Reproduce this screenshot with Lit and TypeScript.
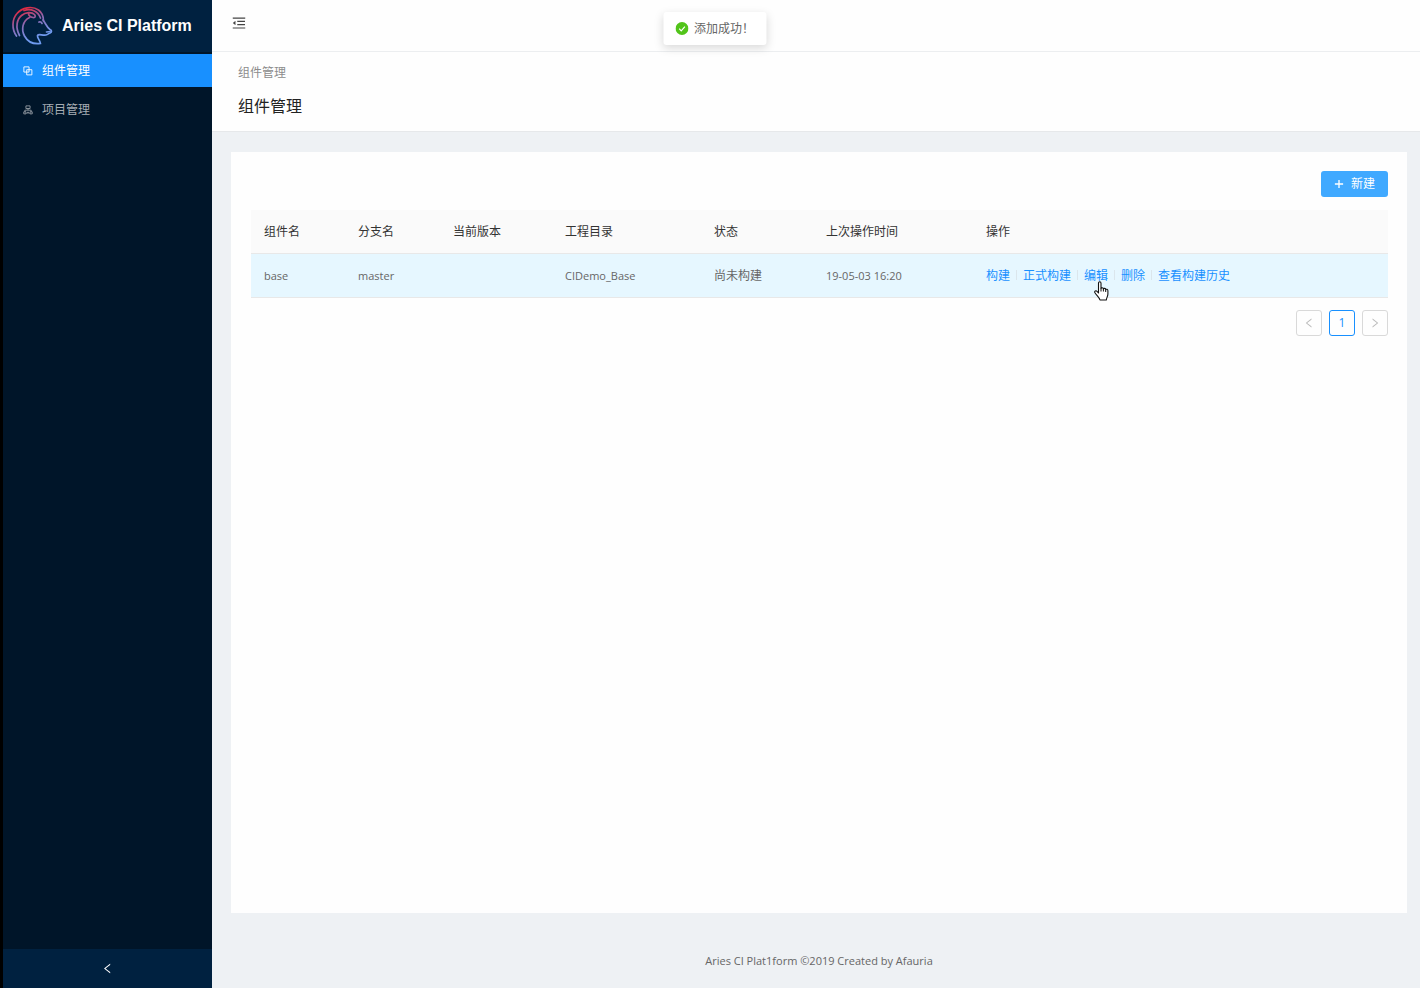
import { LitElement, html, css, svg } from "lit";
import { customElement, state } from "lit/decorators.js";

interface Row {
  name: string;
  branch: string;
  version: string;
  dir: string;
  status: string;
  time: string;
}

const columns = ["组件名", "分支名", "当前版本", "工程目录", "状态", "上次操作时间", "操作"];
const rows: Row[] = [
  { name: "base", branch: "master", version: "", dir: "CIDemo_Base", status: "尚未构建", time: "19-05-03 16:20" },
];
const actions = ["构建", "正式构建", "编辑", "删除", "查看构建历史"];

const icon = (size: number, body: unknown) =>
  html`<svg width=${size} height=${size} viewBox="0 0 1024 1024" fill="currentColor" aria-hidden="true">${body}</svg>`;

const foldIcon = svg`<path d="M408 442h480c4.4 0 8-3.6 8-8v-56c0-4.4-3.6-8-8-8H408c-4.4 0-8 3.6-8 8v56c0 4.4 3.6 8 8 8zm-8 204c0 4.4 3.6 8 8 8h480c4.4 0 8-3.6 8-8v-56c0-4.4-3.6-8-8-8H408c-4.4 0-8 3.6-8 8v56zm504-486H120c-4.4 0-8 3.6-8 8v56c0 4.4 3.6 8 8 8h784c4.4 0 8-3.6 8-8v-56c0-4.4-3.6-8-8-8zm0 632H120c-4.4 0-8 3.6-8 8v56c0 4.4 3.6 8 8 8h784c4.4 0 8-3.6 8-8v-56c0-4.4-3.6-8-8-8zM115.4 518.9L271.7 642c5.8 4.6 14.4.5 14.4-6.9V388.9c0-7.4-8.5-11.5-14.4-6.9L115.4 505.1a8.74 8.74 0 0 0 0 13.8z"/>`;
const blockIcon = svg`<path fill="none" stroke="currentColor" stroke-width="90" d="M90 90h530v530H90zM380 380h530v530H380z"/>`;
const treeIcon = svg`<path fill="none" stroke="currentColor" stroke-width="80" d="M300 90h424v270H300zM512 360v170M190 700V530h644v170M80 700h230v210H80zM714 700h230v210H714zM400 900l112-200 112 200"/>`;
const leftIcon = svg`<path d="M724 218.3V141c0-6.7-7.7-10.4-12.9-6.3L260.3 486.8a31.86 31.86 0 0 0 0 50.3l450.8 352.1c5.3 4.1 12.9.4 12.9-6.3v-77.3c0-4.9-2.3-9.6-6.1-12.6l-360-281 360-281.1c3.8-3 6.1-7.7 6.1-12.6z"/>`;
const rightIcon = svg`<path d="M765.7 486.8L314.9 134.7A7.97 7.97 0 0 0 302 141v77.3c0 4.9 2.3 9.6 6.1 12.6l360 281.1-360 281.1c-3.9 3-6.1 7.7-6.1 12.6V883c0 6.7 7.7 10.4 12.9 6.3l450.8-352.1a31.96 31.96 0 0 0 0-50.4z"/>`;
const plusIcon = svg`<path d="M444 90h136v844H444zM90 444h844v136H90z"/>`;

@customElement("app-root")
export class AppRoot extends LitElement {
  @state() private active = 0;

  static styles = css`
    :host {
      display: flex;
      position: relative;
      min-height: 100vh;
      box-sizing: border-box;
      border-left: 3px solid #000;
      background: #eef1f4;
      color: #666;
      font: 11px/18px "Open Sans", "Noto Sans CJK SC", sans-serif;
    }
    * { box-sizing: border-box; }
    svg { display: block; flex: none; }
    a { text-decoration: none; color: inherit; }
    button {
      font: inherit;
      padding: 0;
      border: 0;
      background: none;
      color: inherit;
      display: flex;
      align-items: center;
      justify-content: center;
    }
    .cjk { font-size: 12px; }
    .side {
      width: 209px;
      flex: none;
      display: flex;
      flex-direction: column;
      background: #001529;
      color: #a6adb4;
    }
    .brand {
      height: 52px;
      padding-left: 8px;
      display: flex;
      align-items: center;
      gap: 9px;
      background: #002140;
      color: #fff;
    }
    .brand-name {
      margin: 0;
      font: bold 16px/24px "Liberation Sans", Arial, sans-serif;
      white-space: nowrap;
    }
    .menu {
      flex: 1;
      padding-top: 2px;
      display: flex;
      flex-direction: column;
      gap: 6px;
    }
    .item {
      height: 33px;
      padding-left: 20px;
      display: flex;
      align-items: center;
      gap: 9px;
      font-size: 12px;
    }
    .item.on { background: #1890ff; color: #fff; }
    .collapse { height: 39px; background: #002140; color: #fff; }
    .main {
      flex: 1;
      min-width: 0;
      display: flex;
      flex-direction: column;
    }
    .top {
      height: 52px;
      padding: 15px 19px;
      background: #fefefe;
      border-bottom: 1px solid #eceef0;
    }
    .top button { color: #444; }
    .heading {
      height: 80px;
      padding: 12px 26px;
      background: #fefefe;
      border-bottom: 1px solid #e6e8ea;
    }
    .crumb { font-size: 12px; color: #8c8c8c; }
    .title {
      margin: 12px 0 0;
      font-size: 16px;
      line-height: 24px;
      font-weight: 400;
      color: #222;
    }
    .card {
      flex: 1;
      margin: 20px 13px 0 19px;
      padding: 19px 19px 20px 20px;
      background: #fefefe;
    }
    .tools { display: flex; justify-content: flex-end; }
    .add {
      width: 67px;
      height: 26px;
      gap: 7px;
      border-radius: 3px;
      background: #40a9ff;
      color: #fff;
      font-size: 12px;
    }
    table {
      width: 100%;
      margin-top: 13px;
      table-layout: fixed;
      border-collapse: separate;
      border-spacing: 0;
    }
    .c0 { width: 94px; }
    .c1 { width: 95px; }
    .c2 { width: 112px; }
    .c3 { width: 149px; }
    .c4 { width: 112px; }
    .c5 { width: 160px; }
    th, td {
      height: 44px;
      padding: 0 13px;
      text-align: left;
      font-weight: 400;
      border-bottom: 1px solid #e8e8e8;
      white-space: nowrap;
    }
    th { background: #fafafa; color: #333; font-size: 12px; }
    td { background: #e6f7ff; }
    .acts { display: flex; align-items: center; font-size: 12px; color: #1890ff; }
    .act + .act::before {
      content: "";
      display: inline-block;
      width: 1px;
      height: 10px;
      margin: 0 6px;
      background: #dbe6ec;
    }
    .act { position: relative; }
    .hand { position: absolute; right: -1px; top: 14px; }
    .pages {
      margin-top: 12px;
      display: flex;
      justify-content: flex-end;
      gap: 7px;
    }
    .pages button {
      width: 26px;
      height: 26px;
      border: 1px solid #d9d9d9;
      border-radius: 3px;
      color: #bbb;
    }
    .pages .now { border-color: #1890ff; color: #1890ff; font-size: 12px; }
    footer { padding: 39px 13px 18px 19px; text-align: center; }
    .toast {
      position: absolute;
      top: 12px;
      left: 50%;
      transform: translateX(-50%);
      height: 33px;
      padding: 0 12px;
      margin-left: 3px;
      display: flex;
      align-items: center;
      gap: 6px;
      border-radius: 3px;
      background: #fff;
      box-shadow: 0 3px 10px rgba(0, 0, 0, 0.15);
      font-size: 12px;
      white-space: nowrap;
    }
  `;

  private logo() {
    return html`<svg width="42" height="42" viewBox="11 6 42 42" fill="none" stroke="url(#g)" stroke-width="1.7" stroke-linecap="round" stroke-linejoin="round" role="img" aria-label="Aries">
      <defs><linearGradient id="g" gradientUnits="userSpaceOnUse" x1="22" y1="10" x2="34" y2="40">
        <stop offset="0" stop-color="#e0283f"/><stop offset=".45" stop-color="#8c67b0"/><stop offset="1" stop-color="#6f9bf0"/>
      </linearGradient></defs>
      <path d="M16.500 37C11.500 30 12 20 17 14.500C22 8.500 32 6.500 38.500 11C42 13.500 43.500 17 43.500 22"/>
      <path d="M19.500 36.500C15 28 17 20 21.500 16.500C25.500 13 31.500 12.500 34.500 15.500C36 17.500 35 19 33 18.500C30.500 18 28.500 17 28.500 14.500"/>
      <path d="M24 11.500C31 9 38 12 40.500 19"/>
      <path d="M29.500 18.500C22.500 22 21 30.500 24.500 37C27.500 42.500 33 45.500 40.500 44.500C40 41 37 39 37.500 36.500C38.500 34.500 42 36.500 46 36C48 35.500 48.500 34.500 50 34C52 33 52 31.500 50 30.500C46.500 28 45.500 24 43 21"/>
      <path d="M39 23C40 22.500 41.500 23 42 24.500M46.500 33L50 32.500"/>
    </svg>`;
  }

  private hand() {
    return html`<svg class="hand" width="15" height="20" viewBox="0 0 15 20" aria-hidden="true">
      <path fill="#fff" stroke="#111" stroke-width="1.1" stroke-linejoin="round" d="M4.500 12V2.200C4.500 .3 7 .3 7 2.200V7.500C7.300 6.400 9.300 6.500 9.400 8C9.800 7 11.700 7.200 11.700 8.700C12.200 7.900 13.900 8.200 13.900 9.800V13C13.900 15.500 12.500 16.500 12.300 19H6C5.500 16.500 2.500 14.500 .8 11.500C.3 10 2 9.300 3 10.300Z"/>
      <path fill="none" stroke="#111" d="M7 7.500V10.500M9.400 8V10.500M11.700 8.700V11"/>
    </svg>`;
  }

  render() {
    const menu = [
      { label: "组件管理", glyph: blockIcon },
      { label: "项目管理", glyph: treeIcon },
    ];
    return html`
      <aside class="side">
        <div class="brand">${this.logo()}<h1 class="brand-name">Aries CI Platform</h1></div>
        <nav class="menu">
          ${menu.map((m, i) => html`<a href="#" class="item ${i === this.active ? "on" : ""}"
            @click=${(e: Event) => { e.preventDefault(); this.active = i; }}>${icon(10, m.glyph)}<span>${m.label}</span></a>`)}
        </nav>
        <button class="collapse" aria-label="收起">${icon(13, leftIcon)}</button>
      </aside>
      <div class="main">
        <header class="top"><button aria-label="折叠菜单">${icon(16, foldIcon)}</button></header>
        <div class="heading">
          <div class="crumb">组件管理</div>
          <h2 class="title">组件管理</h2>
        </div>
        <main class="card">
          <div class="tools"><button class="add">${icon(10, plusIcon)}<span>新建</span></button></div>
          <table>
            <colgroup>${columns.map((_, i) => html`<col class="c${i}">`)}</colgroup>
            <thead><tr>${columns.map((c) => html`<th scope="col">${c}</th>`)}</tr></thead>
            <tbody>${rows.map((r) => html`<tr>
              <td>${r.name}</td><td>${r.branch}</td><td>${r.version}</td><td>${r.dir}</td>
              <td class="cjk">${r.status}</td><td>${r.time}</td>
              <td><div class="acts">${actions.map((a) => html`<span class="act"><a href="#">${a}</a>${a === "编辑" ? this.hand() : ""}</span>`)}</div></td>
            </tr>`)}</tbody>
          </table>
          <nav class="pages" aria-label="分页">
            <button disabled aria-label="上一页">${icon(12, leftIcon)}</button>
            <button class="now">1</button>
            <button disabled aria-label="下一页">${icon(12, rightIcon)}</button>
          </nav>
        </main>
        <footer>Aries CI Plat1form ©2019 Created by Afauria</footer>
      </div>
      <div class="toast" role="status">
        <svg width="13" height="13" viewBox="0 0 13 13" aria-hidden="true"><circle cx="6.500" cy="6.500" r="6.500" fill="#52c41a"/><path d="M3.700 6.600l2 2.200 3.700-4.200" fill="none" stroke="#fff" stroke-width="1.2"/></svg>
        <span>添加成功！</span>
      </div>
    `;
  }
}
